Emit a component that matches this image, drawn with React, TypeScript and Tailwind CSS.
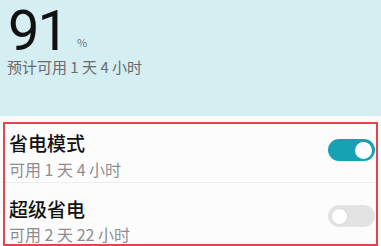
import React from "react";

const font = { fontFamily: '"Noto Sans CJK SC", Roboto, sans-serif' };

function Toggle({ on }: { on: boolean }) {
  return on ? (
    <div className="w-[47px] h-[22px] rounded-full bg-[#17a2b4] flex items-center justify-end pr-[3px]">
      <div className="w-[17px] h-[17px] rounded-full bg-white" />
    </div>
  ) : (
    <div className="w-[47px] h-[22px] rounded-full bg-[#e3e3e3] flex items-center justify-start pl-[3px]">
      <div className="w-[17px] h-[17px] rounded-full bg-white border border-[#d8d8d8]" />
    </div>
  );
}

export default function App() {
  return (
    <div className="w-[381px] h-[246px] bg-[#fafafa] overflow-hidden" style={font}>
      <div className="h-[116px] bg-[#d5eef2] pl-[8px] pt-[3px]">
        <div className="flex items-end">
          <span className="text-[56px] leading-[56px] font-normal tracking-[-2px] text-[#111]" style={{ fontFamily: "Roboto, sans-serif" }}>91</span>
          <span className="text-[11px] leading-[14px] text-[#777] ml-[10px] mb-[10px]">%</span>
        </div>
        <div className="text-[15px] leading-[16px] text-[#6a6a6a] -ml-[1px]">预计可用 1 天 4 小时</div>
      </div>
      <div className="mt-[6px] mx-[3px] h-[124px] border-2 border-[#e0474c] bg-[#fcfcfc] flex flex-col">
        <div className="h-[59px] flex items-start justify-between pl-[4px] pr-[1px] pt-[7px] border-b border-[#ececec]">
          <div className="flex flex-col">
            <span className="text-[19px] leading-[24px] font-medium text-[#111]">省电模式</span>
            <span className="text-[16px] leading-[20px] text-[#8e8e8e] mt-[4px]">可用 1 天 4 小时</span>
          </div>
          <div className="mt-[8px]">
            <Toggle on />
          </div>
        </div>
        <div className="flex-1 flex items-start justify-between pl-[4px] pr-[1px] pt-[14px]">
          <div className="flex flex-col">
            <span className="text-[19px] leading-[24px] font-medium text-[#111]">超级省电</span>
            <span className="text-[16px] leading-[20px] text-[#8e8e8e] mt-[3px]">可用 2 天 22 小时</span>
          </div>
          <div className="mt-[8px]">
            <Toggle on={false} />
          </div>
        </div>
      </div>
    </div>
  );
}
